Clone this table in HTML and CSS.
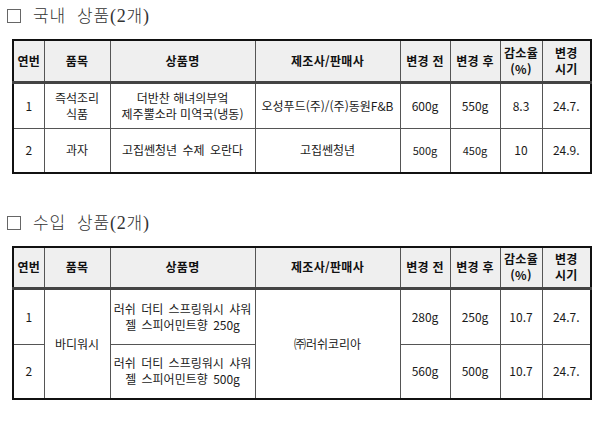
FILE: index.html
```html
<!DOCTYPE html>
<html lang="ko">
<head>
<meta charset="utf-8">
<link rel="stylesheet" href="styles.css">
</head>
<body>
<section class="sec">
  <h2 class="title"><span class="box"></span><span class="ttext">국내&nbsp; 상품<span class="paren">(2</span>개<span class="paren">)</span></span></h2>
  <table class="tbl t1">
    <colgroup>
      <col class="c1"><col class="c2"><col class="c3"><col class="c4"><col class="c5"><col class="c6"><col class="c7"><col class="c8">
    </colgroup>
    <thead>
      <tr class="hrow"><th>연번</th><th>품목</th><th>상품명</th><th>제조사/판매사</th><th>변경 전</th><th>변경 후</th><th>감소율<br>(%)</th><th>변경<br>시기</th></tr>
    </thead>
    <tbody>
      <tr class="r1a"><td>1</td><td>즉석조리<br>식품</td><td>더반찬 해녀의부엌<br>제주뿔소라 미역국(냉동)</td><td>오성푸드(주)/(주)동원F&amp;B</td><td>600g</td><td>550g</td><td>8.3</td><td>24.7.</td></tr>
      <tr class="r1b"><td>2</td><td>과자</td><td class="ws">고집쎈청년 수제 오란다</td><td>고집쎈청년</td><td class="sm">500g</td><td class="sm">450g</td><td>10</td><td>24.9.</td></tr>
    </tbody>
  </table>
</section>
<section class="sec sec2">
  <h2 class="title"><span class="box"></span><span class="ttext">수입&nbsp; 상품<span class="paren">(2</span>개<span class="paren">)</span></span></h2>
  <table class="tbl t2">
    <colgroup>
      <col class="c1"><col class="c2"><col class="c3"><col class="c4"><col class="c5"><col class="c6"><col class="c7"><col class="c8">
    </colgroup>
    <thead>
      <tr class="hrow2"><th>연번</th><th>품목</th><th>상품명</th><th>제조사/판매사</th><th>변경 전</th><th>변경 후</th><th>감소율<br>(%)</th><th>변경<br>시기</th></tr>
    </thead>
    <tbody>
      <tr class="r2a"><td>1</td><td rowspan="2">바디워시</td><td class="ws">러쉬 더티 스프링워시 샤워<br>젤 스피어민트향 250g</td><td rowspan="2">㈜러쉬코리아</td><td>280g</td><td>250g</td><td>10.7</td><td>24.7.</td></tr>
      <tr class="r2b"><td>2</td><td class="ws">러쉬 더티 스프링워시 샤워<br>젤 스피어민트향 500g</td><td>560g</td><td>500g</td><td>10.7</td><td>24.7.</td></tr>
    </tbody>
  </table>
</section>
</body>
</html>
```
FILE: styles.css
```css
html, body {
  margin: 0;
  padding: 0;
  background: #fff;
}
body {
  padding: 4px 0 0 0;
  font-family: "Noto Sans CJK KR", "Noto Sans", sans-serif;
  color: #1a1a1a;
}
.sec {
  padding-left: 12px;
}
.sec2 {
  margin-top: 37px;
}
.title {
  margin: 0 0 13px -5px;
  height: 22px;
  display: flex;
  align-items: center;
  font-weight: normal;
  font-size: 17px;
  line-height: 22px;
  color: #333;
}
.box {
  display: inline-block;
  width: 14px;
  height: 14px;
  border: 1px solid #666;
  box-sizing: border-box;
  margin-right: 12px;
  margin-top: 1px;
}
.ttext {
  font-weight: 300;
  letter-spacing: 0.8px;
}
.paren {
  font-family: "Liberation Serif", serif;
  font-size: 18px;
}
.tbl {
  border-collapse: collapse;
  table-layout: fixed;
  width: 578px;
  border: 2px solid #111;
  font-size: 12px;
  line-height: 16px;
}
.c1 { width: 31px; }
.c2 { width: 66px; }
.c3 { width: 145px; }
.c4 { width: 145px; }
.c5 { width: 50px; }
.c6 { width: 50px; }
.c7 { width: 42px; }
.c8 { width: 49px; }
.tbl th, .tbl td {
  border: 1px solid #555;
  text-align: center;
  vertical-align: middle;
  padding: 0;
  white-space: nowrap;
  overflow: hidden;
}
.tbl th {
  background: #efefef;
  font-weight: bold;
  color: #111;
  letter-spacing: 0.3px;
}
.tbl thead tr th {
  border-bottom: 3px solid #444;
}
.tbl td {
  color: #1a1a1a;
}
.ws {
  word-spacing: 2px;
}
.hrow { height: 42px; }
.r1a { height: 46px; }
.r1b { height: 45px; }
.hrow2 { height: 41px; }
.r2a { height: 56px; }
.r2b { height: 55px; }
.sm { font-size: 11px; }
```
